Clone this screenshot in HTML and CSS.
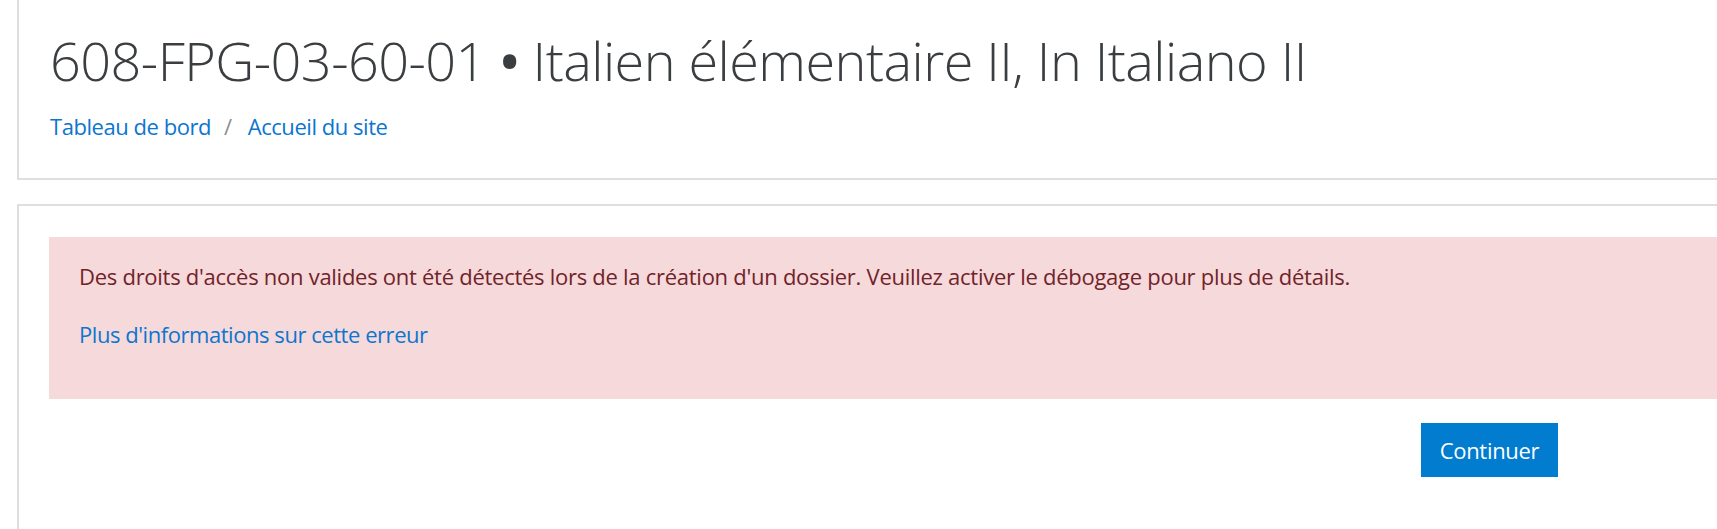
FILE: index.html
```html
<!DOCTYPE html>
<html lang="fr">
<head>
<meta charset="utf-8">
<title>608-FPG-03-60-01 • Italien élémentaire II, In Italiano II</title>
<link rel="stylesheet" href="styles.css">
</head>
<body>
<div class="page">
  <header class="card header-card">
    <h1 class="page-title">608-FPG-03-60-01 <span class="dot">•</span> Italien élémentaire II, In Italiano II</h1>
    <nav class="breadcrumb">
      <a href="#">Tableau de bord</a>
      <span class="sep">/</span>
      <a href="#">Accueil du site</a>
    </nav>
  </header>
  <main class="card main-card">
    <div class="alert">
      <p class="alert-msg">Des droits d'accès non valides ont été détectés lors de la création d'un dossier. Veuillez activer le débogage pour plus de détails.</p>
      <p class="alert-link"><a href="#">Plus d'informations sur cette erreur</a></p>
    </div>
    <div class="continue">
      <button class="btn" type="button">Continuer</button>
    </div>
  </main>
</div>
</body>
</html>
```
FILE: styles.css
```css
* { box-sizing: border-box; }
html, body { margin: 0; padding: 0; overflow: hidden; background: #fff; }
body {
  font-family: "Open Sans", "Noto Sans", sans-serif;
  font-size: 22px;
  letter-spacing: -0.45px;
  line-height: 33.75px;
  color: #373a3c;
}
a { color: #0b76cf; text-decoration: none; }
.page {
  width: 2962px;
  padding-left: 17px;
}
.card {
  background: #fff;
  border: 2px solid #dfdfdf;
}
.header-card {
  border-top: none;
  padding: 27px 30px 34px 31px;
}
.page-title {
  margin: 0;
  font-size: 54px;
  font-weight: 300;
  letter-spacing: -0.55px;
  line-height: 67px;
  color: #3b3e41;
}
.page-title .dot {
  font-weight: 600;
}
.breadcrumb {
  margin-top: 16px;
  display: flex;
  align-items: center;
}
.breadcrumb .sep {
  color: #8a8f94;
  padding: 0 16px 0 13px;
}
.main-card {
  margin-top: 24px;
  padding: 31px 30px 60px 30px;
  border-bottom: none;
}
.alert {
  background: #f6d9da;
  color: #71232a;
  padding: 23px 30px 24px;
}
.alert p { margin: 0 0 24px; }
.alert .alert-msg { letter-spacing: -0.27px; }
.continue {
  margin-top: 24px;
  display: flex;
  justify-content: center;
}
.btn {
  font-family: inherit;
  font-size: 22px;
  letter-spacing: -0.3px;
  line-height: 36px;
  padding: 9px 0;
  width: 137px;
  border: none;
  border-radius: 0;
  background: #027ccf;
  color: #fff;
  cursor: pointer;
}
```
